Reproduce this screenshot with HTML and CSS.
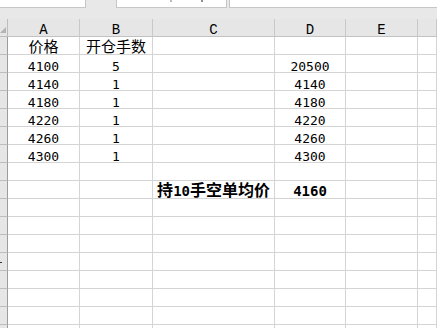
FILE: index.html
```html
<!DOCTYPE html>
<html lang="zh">
<head>
<meta charset="utf-8">
<title>Sheet</title>
<link rel="stylesheet" href="styles.css">
</head>
<body>
<div class="topbar">
  <div class="tab tab-a"></div>
  <div class="tab tab-b"><span class="mark m1"></span><span class="mark m2"></span></div>
  <div class="tab tab-c"></div>
</div>
<div class="sheet">
  <div class="row head">
    <div class="rh corner"><span class="tri"></span></div>
    <div class="ch">A</div><div class="ch">B</div><div class="ch">C</div><div class="ch">D</div><div class="ch">E</div><div class="ch"></div>
  </div>
  <div class="row title">
    <div class="rh"></div>
    <div class="c">价格</div><div class="c">开仓手数</div><div class="c"></div><div class="c"></div><div class="c"></div><div class="c"></div>
  </div>
  <div class="row">
    <div class="rh"></div>
    <div class="c">4100</div><div class="c">5</div><div class="c"></div><div class="c">20500</div><div class="c"></div><div class="c"></div>
  </div>
  <div class="row">
    <div class="rh"></div>
    <div class="c">4140</div><div class="c">1</div><div class="c"></div><div class="c">4140</div><div class="c"></div><div class="c"></div>
  </div>
  <div class="row">
    <div class="rh"></div>
    <div class="c">4180</div><div class="c">1</div><div class="c"></div><div class="c">4180</div><div class="c"></div><div class="c"></div>
  </div>
  <div class="row">
    <div class="rh"></div>
    <div class="c">4220</div><div class="c">1</div><div class="c"></div><div class="c">4220</div><div class="c"></div><div class="c"></div>
  </div>
  <div class="row">
    <div class="rh"></div>
    <div class="c">4260</div><div class="c">1</div><div class="c"></div><div class="c">4260</div><div class="c"></div><div class="c"></div>
  </div>
  <div class="row">
    <div class="rh"></div>
    <div class="c">4300</div><div class="c">1</div><div class="c"></div><div class="c">4300</div><div class="c"></div><div class="c"></div>
  </div>
  <div class="row">
    <div class="rh"></div>
    <div class="c"></div><div class="c"></div><div class="c"></div><div class="c"></div><div class="c"></div><div class="c"></div>
  </div>
  <div class="row bold">
    <div class="rh"></div>
    <div class="c"></div><div class="c"></div><div class="c right"><span><span class="cjk">持</span>10<span class="cjk">手空单均价</span></span></div><div class="c">4160</div><div class="c"></div><div class="c"></div>
  </div>
  <div class="row"><div class="rh"></div><div class="c"></div><div class="c"></div><div class="c"></div><div class="c"></div><div class="c"></div><div class="c"></div></div>
  <div class="row"><div class="rh"></div><div class="c"></div><div class="c"></div><div class="c"></div><div class="c"></div><div class="c"></div><div class="c"></div></div>
  <div class="row"><div class="rh"></div><div class="c"></div><div class="c"></div><div class="c"></div><div class="c"></div><div class="c"></div><div class="c"></div></div>
  <div class="row"><div class="rh"><span class="dot"></span></div><div class="c"></div><div class="c"></div><div class="c"></div><div class="c"></div><div class="c"></div><div class="c"></div></div>
  <div class="row"><div class="rh"></div><div class="c"></div><div class="c"></div><div class="c"></div><div class="c"></div><div class="c"></div><div class="c"></div></div>
  <div class="row"><div class="rh"></div><div class="c"></div><div class="c"></div><div class="c"></div><div class="c"></div><div class="c"></div><div class="c"></div></div>
  <div class="row"><div class="rh"></div><div class="c"></div><div class="c"></div><div class="c"></div><div class="c"></div><div class="c"></div><div class="c"></div></div>
  <div class="row"><div class="rh"></div><div class="c"></div><div class="c"></div><div class="c"></div><div class="c"></div><div class="c"></div><div class="c"></div></div>
</div>
</body>
</html>
```
FILE: styles.css
```css
html, body {
  margin: 0;
  padding: 0;
  background: #ffffff;
  overflow: hidden;
}
body {
  width: 437px;
  height: 328px;
  font-family: "DejaVu Sans Mono", "Noto Sans CJK SC", monospace;
  font-size: 13px;
  color: #000;
}
.topbar {
  height: 19px;
  background: #e8e8e8;
  display: flex;
  align-items: flex-start;
}
.tab {
  background: #fff;
  border: 1px solid #c6c6c6;
  border-top: none;
  box-sizing: border-box;
  height: 8px;
  position: relative;
}
.tab-a {
  width: 86px;
  border-left: none;
}
.tab-b {
  width: 111px;
  margin-left: 30px;
}
.tab-c {
  flex: 1;
  margin-left: 2px;
  border-right: none;
}
.mark {
  position: absolute;
  top: 0;
  width: 2px;
  height: 2px;
  background: #bcbcbc;
}
.m1 { left: 53px; }
.m2 { left: 84px; background: #8f8f8f; }

.sheet {
  display: flex;
  flex-direction: column;
}
.row {
  display: grid;
  grid-template-columns: 8px 72px 73px 122px 71px 72px 1fr;
  height: 18px;
}
.row > div {
  box-sizing: border-box;
  height: 18px;
  border-bottom: 1px solid #d4d4d4;
  border-right: 1px solid #d4d4d4;
  white-space: nowrap;
}
.row > .rh {
  background: #e6e6e6;
  border-right: 1px solid #9c9c9c;
  border-bottom: 1px solid #bdbdbd;
  position: relative;
}
.head > div {
  background: #e6e6e6;
  border-bottom: 1px solid #c2c2c2;
  border-right: 1px solid #c8c8c8;
}
.head > .corner {
  border-right: 1px solid #bdbdbd;
}
.tri {
  position: absolute;
  right: 1px;
  bottom: 3px;
  width: 0;
  height: 0;
  border-left: 6px solid transparent;
  border-bottom: 6px solid #b4b4b4;
}
.dot {
  position: absolute;
  left: 0;
  top: 9px;
  width: 2px;
  height: 1px;
  background: #333;
}
.ch {
  font-family: "Liberation Mono", "DejaVu Sans Mono", monospace;
  font-size: 14px;
  line-height: 11px;
  display: flex;
  align-items: flex-end;
  justify-content: center;
}
.c {
  display: flex;
  align-items: flex-end;
  justify-content: center;
  line-height: 11px;
}
.title .c {
  font-family: "Noto Sans CJK SC", sans-serif;
  font-size: 15px;
  line-height: 17px;
}
.bold .c {
  font-weight: 700;
  font-size: 14px;
  line-height: 14px;
}
.bold .c.right {
  justify-content: flex-end;
  padding-right: 4px;
}
.cjk {
  font-family: "Noto Sans CJK SC", sans-serif;
  font-size: 16px;
  line-height: 10px;
}
```
